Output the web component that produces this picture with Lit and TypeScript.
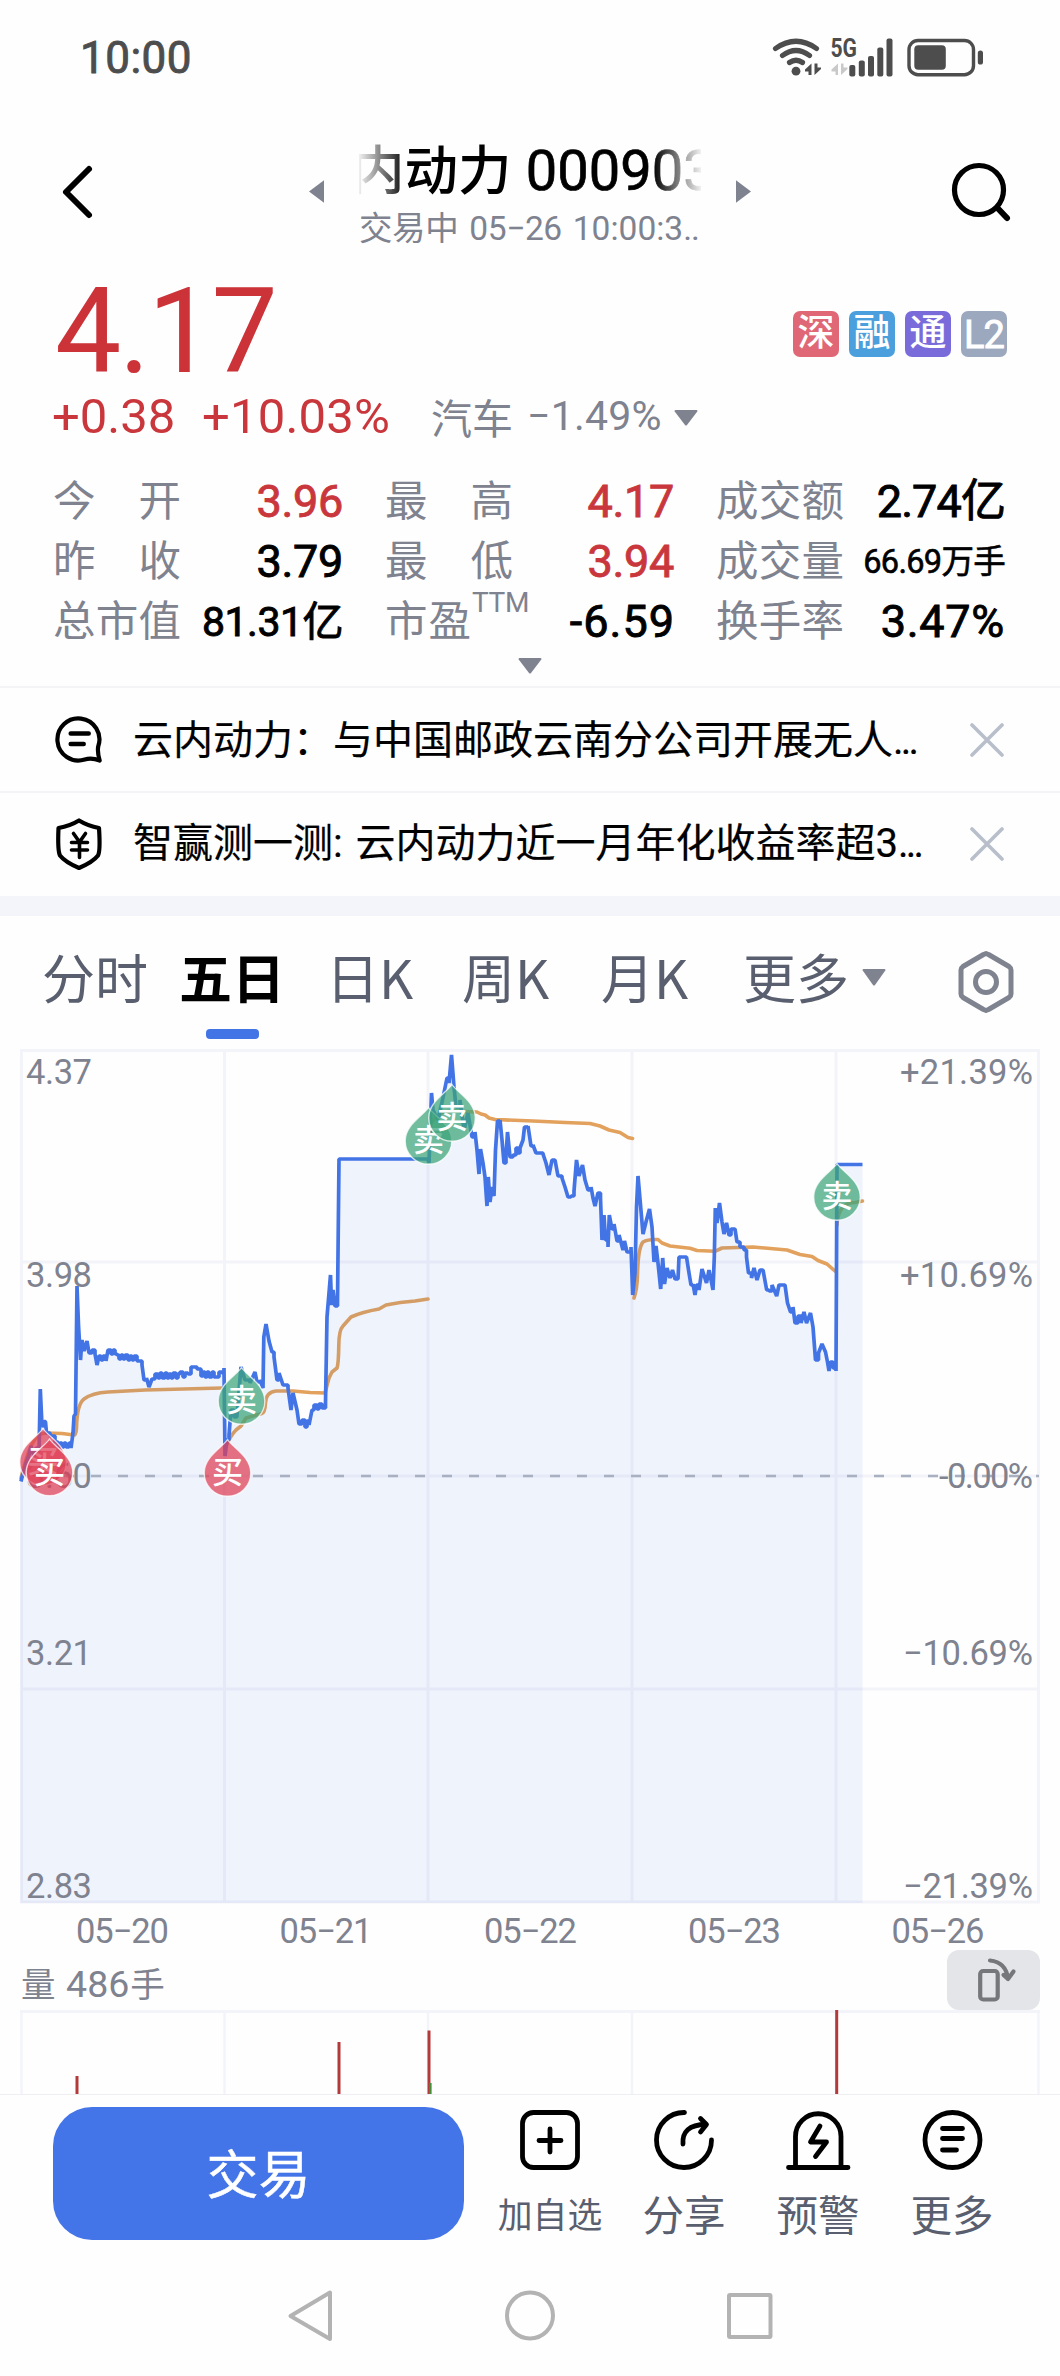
import { LitElement, html, svg, css } from "lit";
import { customElement, property } from "lit/decorators.js";
import { classMap } from "lit/directives/class-map.js";

type Point = [number, number];

const GRID_X = [21.5, 224.5, 428, 632, 836, 1038.5];
const GRID_Y = [1050.5, 1262, 1476, 1689, 1902];

const PRICE: Point[] = [
  [21, 1481.5], [23, 1473], [26, 1463], [29, 1455], [31, 1446], [34, 1456], [36, 1448], [39, 1452], [40.3, 1389], [42, 1426], [44, 1421],
  [45.5, 1422], [46.5, 1433], [50, 1436], [55, 1442], [58, 1447], [60, 1443], [62, 1447], [64, 1443], [66, 1447], [69, 1443], [71, 1448], [73, 1433], [74, 1416],
  [75.5, 1414], [77, 1286], [78.5, 1325], [80.5, 1360], [82, 1340], [84, 1351], [87, 1341], [89, 1353], [92, 1350], [95, 1354],
  [97, 1365], [99, 1356], [101, 1360], [103, 1356], [106, 1361], [108, 1350], [111, 1354], [113, 1350], [115, 1354], [117, 1355], [119, 1359], [121, 1355], [123, 1359], [125, 1355],
  [128, 1360], [130, 1356], [132, 1360], [134, 1356], [137, 1361], [142, 1365], [144, 1380], [146.5, 1378], [149, 1387], [152, 1379], [155, 1374], [158, 1378],
  [160, 1373], [162, 1378], [165, 1373], [167, 1378], [169, 1374], [171, 1378], [173, 1373], [176, 1378], [178, 1374], [180, 1372], [183, 1377], [185, 1373], [188, 1374], [191, 1367], [197, 1369],
  [201, 1376], [203, 1372], [205, 1377], [207, 1372], [209, 1377], [212, 1372], [214, 1377], [216, 1377], [219, 1372], [222, 1373], [224, 1368], [225, 1456], [227, 1440],
  [229, 1435], [231, 1410], [234, 1417], [237, 1415], [241, 1367], [245, 1380], [250, 1383], [255, 1372], [257, 1382], [260, 1380],
  [263, 1388], [263.8, 1337], [266, 1324], [269, 1341], [272, 1352], [274, 1357], [277, 1380], [279, 1373], [283, 1385], [288, 1388],
  [291, 1410], [293, 1393], [297, 1410], [299, 1424], [302, 1420], [305, 1427], [307, 1421], [309, 1425], [312, 1410], [314, 1405], [317, 1409], [319, 1404],
  [322, 1408], [325.5, 1403], [327, 1317], [330.5, 1275], [331.6, 1305], [333, 1290], [335, 1306], [337.5, 1302], [339, 1159],
  [428, 1159], [429, 1163], [431.5, 1093], [433, 1110], [438, 1120], [442.5, 1100], [447, 1078], [449, 1083], [451.5, 1055],
  [454, 1087], [456, 1107], [460, 1100], [464, 1130], [468, 1113], [472, 1137], [475, 1132], [477, 1150], [479, 1174], [480.5, 1149],
  [483, 1163], [485, 1177], [487, 1206], [488.3, 1177], [490, 1202], [492, 1187], [494, 1196], [495.5, 1150], [497.5, 1121],
  [500, 1120], [502, 1140], [504, 1163], [506, 1156], [507.5, 1132], [510, 1157], [513, 1155], [516, 1148], [518, 1153], [520, 1148],
  [523, 1140], [524.5, 1127], [528, 1126], [531, 1146], [533, 1145], [536, 1153], [543, 1154], [546, 1163], [549, 1175], [552, 1160],
  [555, 1160], [558, 1176], [562, 1178], [565, 1187], [568, 1197], [571, 1196], [574, 1191], [576.5, 1160], [579, 1176],
  [582.5, 1165], [585, 1180], [588, 1190], [591, 1187], [593, 1198], [595, 1206], [598, 1193], [600.5, 1198], [602, 1240],
  [604, 1215], [605.5, 1240], [608, 1247], [609.3, 1215], [612, 1229], [614, 1224], [617, 1241], [619, 1235], [623, 1250],
  [624.5, 1241], [627, 1252], [631, 1247], [632.7, 1295], [635, 1273], [636.5, 1207], [638, 1176], [640.5, 1205], [643, 1234],
  [646.5, 1220], [649.5, 1209], [652, 1227], [654, 1262], [656, 1246], [658, 1263], [660.7, 1289], [662.7, 1258], [664.5, 1284],
  [667, 1268], [670, 1278], [672.5, 1270], [675, 1279], [678, 1279], [679, 1257], [686.5, 1257], [689, 1273], [691, 1285],
  [693, 1284], [695, 1295], [696.5, 1285], [699, 1290], [702, 1269], [706.5, 1283], [709, 1270], [713, 1290], [714.3, 1257],
  [715.3, 1208], [717, 1223], [719.5, 1203], [722, 1222], [724, 1234], [726.5, 1223], [729, 1235], [731, 1229], [735, 1229],
  [737, 1242], [740, 1247], [744, 1250], [746.5, 1257], [748.5, 1273], [751.5, 1278], [754, 1268], [757, 1280], [760, 1270],
  [763, 1270], [766.7, 1290], [769, 1291], [772, 1285], [776.7, 1296], [779, 1285], [785, 1285], [787.5, 1303], [790.5, 1312],
  [793, 1307], [795, 1323], [798, 1316], [801, 1323], [804, 1312], [806.5, 1323], [810.5, 1313], [813, 1327], [815.5, 1360],
  [818.5, 1353], [822, 1344], [825.5, 1352], [827.5, 1362], [829, 1371], [830.5, 1362], [833, 1368], [836, 1371], [837, 1164.5],
  [862.5, 1164.5],
];

/** Small moves are drawn as one-tick steps, larger ones as straight segments. */
function pricePath(points: Point[]): string {
  return points.map(([x, y], i) => {
    if (i === 0) return `M${x} ${y}`;
    const [px, py] = points[i - 1];
    return Math.abs(y - py) < 7.5 && x - px > 1.5 ? `H${x}V${y}` : `L${x} ${y}`;
  }).join("");
}

const AVERAGES: string[] = [
  "M21 1478C28 1450 34 1433 46 1433L62 1433.5L74 1435Q76 1435 76.5 1428Q77 1404 84 1399Q92 1393 108 1392L145 1390L222 1388",
  "M225 1448Q230 1436 236 1430L241 1426L246 1418L262 1413.5Q265 1413 265.5 1403Q266 1392 276 1391L293 1391L310 1392.5L325 1393L329 1378L332 1372L337 1368Q338.500 1364 338.800 1345Q339 1330 343 1326L351 1317Q362 1312 379 1309L386 1305Q400 1302 415 1301L428 1299",
  "M430 1125Q438 1111 452 1111L477 1112L481 1114L485 1115L489 1118L495 1119.500L533 1121L565 1122.500L590 1123.500L600 1126L609 1130L620 1132.500L628 1137.500L632.500 1138.500",
  "M634 1298Q637 1290 637.500 1275Q638 1248 643 1242Q648 1239 658 1239.500L662 1243L670 1246L690 1248.300L697 1250.500L715 1251.300L722 1248L753 1247L787 1250L800 1254.500L812 1256.500L818 1260.500L827 1264L835 1271",
  "M837 1225Q838 1206 850 1203L855 1202.500L862.500 1201",
];

const PRICE_LABELS: [string, number][] = [["4.37", 1083.5], ["3.98", 1286.5], ["3.60", 1487.5], ["3.21", 1665], ["2.83", 1897.5]];
const PERCENT_LABELS: [string, number, number][] = [
  ["+21.39%", 1083.5, 133], ["+10.69%", 1286.5, 133], ["-0.00%", 1487.5, 94], ["−10.69%", 1665, 130], ["−21.39%", 1897.5, 130],
];
const DATES: [string, number][] = [["05−20", 122.5], ["05−21", 326], ["05−22", 530.5], ["05−23", 734.5], ["05−26", 938]];

const TRADES: { side: "buy" | "sell"; x: number; y: number }[] = [
  { side: "buy", x: 43, y: 1428.5 },
  { side: "buy", x: 49.5, y: 1439 },
  { side: "buy", x: 227.5, y: 1439.5 },
  { side: "sell", x: 241.5, y: 1367.5 },
  { side: "sell", x: 428.5, y: 1107.5 },
  { side: "sell", x: 452, y: 1084.5 },
  { side: "sell", x: 837, y: 1163.5 },
];

@customElement("status-bar")
class StatusBar extends LitElement {
  static styles = css`
    :host { display: flex; justify-content: space-between; height: 116px; padding: 0 74px 0 80px; box-sizing: border-box; color: #4d4d4d; }
    .time { font: 400 44px/117px Roboto, "Noto Sans CJK SC", sans-serif; -webkit-text-stroke: .9px #4d4d4d; letter-spacing: 0.5px; }
    .icons { width: 214px; height: 116px; }
    .net { font: 700 25.5px Roboto, sans-serif; fill: #4d4d4d; }
  `;
  render() {
    return html`<div class="time">10:00</div>
      <svg class="icons" viewBox="772 0 214 116" fill="#4d4d4d">
        <g fill="none" stroke="#4d4d4d" stroke-width="5.200" stroke-linecap="round">
          <path d="M775.500 48.500Q796 34 816.500 48.500" />
          <path d="M782.500 55.500Q796 45.500 809.500 55.500" />
          <path d="M789.500 62.500Q796 58 802.500 62.500" />
        </g>
        <circle cx="796" cy="71.200" r="4.400" />
        <path d="M811.500 63.500V75H808.500V71.500H805V69.500ZM814.500 63.500V75L821 69V67.500H817.500V63.500Z" />
        <path d="M838 63.500V75H835.500V71.500H831.500V69.500ZM841 63.500V75L847.500 69V67.500H843.500V63.500Z" fill="#c9c9c9" />
        <text class="net" x="830.500" y="57" textLength="26.500" lengthAdjust="spacingAndGlyphs">5G</text>
        <rect x="849.300" y="65" width="6" height="11.500" rx="2" />
        <rect x="858.800" y="60.500" width="6" height="16" rx="2" />
        <rect x="868" y="56" width="6" height="20.500" rx="2" />
        <rect x="877.300" y="47.500" width="6" height="29" rx="2" />
        <rect x="886.500" y="38.500" width="6" height="38" rx="2" />
        <rect x="909" y="40.500" width="64.500" height="34.200" rx="9" fill="none" stroke="#4d4d4d" stroke-width="3.400" />
        <rect x="914.300" y="45.300" width="31.500" height="24.500" rx="4" />
        <rect x="977.800" y="50.500" width="5.200" height="14" rx="2.600" />
      </svg>`;
  }
}

@customElement("stock-header")
class StockHeader extends LitElement {
  static styles = css`
    :host { display: grid; grid-template-columns: 309px 15px 35px 345px 32px 15px 1fr; height: 150px; align-items: center; font-family: Roboto, "Noto Sans CJK SC", sans-serif; }
    .back { width: 309px; height: 150px; grid-column: 1; }
    .prev, .next { width: 15px; height: 150px; }
    .next { grid-column: 6; }
    .title { grid-column: 4; align-self: start; padding-top: 18px; }
    .name { width: 342px; font-weight: 500; font-size: 53.5px; line-height: 74px; white-space: nowrap; text-indent: -8px; color: #000; overflow: hidden;
      -webkit-mask-image: linear-gradient(90deg, rgba(0,0,0,.05), #000 14%, #000 86%, rgba(0,0,0,.05)); mask-image: linear-gradient(90deg, rgba(0,0,0,.05), #000 14%, #000 86%, rgba(0,0,0,.05)); }
    .code { font-weight: 400; font-size: 56px; -webkit-text-stroke: .7px #000; margin-left: 1px; }
    .state { font-size: 33.5px; line-height: 44px; color: #7f828f; white-space: nowrap; display: flex; gap: 11px; margin-top: -2px; letter-spacing: -.4px; }
    .clock { letter-spacing: 0; }
    .dots { letter-spacing: -1px; }
    .search { grid-column: 7; width: 309px; height: 150px; }
  `;
  render() {
    return html`<svg class="back" viewBox="0 116 309 150"><path d="M89 169L66 192L89 215" fill="none" stroke="#000" stroke-width="6" stroke-linecap="round" stroke-linejoin="round" /></svg>
      <svg class="prev" viewBox="309 116 15 150"><path d="M324.500 180V203L309 191.500Z" fill="#7f828f" /></svg>
      <div class="title">
        <div class="name">内动力 <span class="code">000903</span></div>
        <div class="state"><span>交易中</span><span>05−26</span><span class="clock">10:00:3<span class="dots">..</span></span></div>
      </div>
      <svg class="next" viewBox="736 116 15 150"><path d="M735.500 180V203L751 191.500Z" fill="#7f828f" /></svg>
      <svg class="search" viewBox="751 116 309 150"><g fill="none" stroke="#000" stroke-width="5.200" stroke-linecap="round"><circle cx="979" cy="190" r="24.500" /><path d="M997.500 208L1007 218" stroke-width="6" /></g></svg>`;
  }
}

@customElement("stock-quote")
class StockQuote extends LitElement {
  static styles = css`
    :host { display: block; height: 420px; font-family: Roboto, "Noto Sans CJK SC", sans-serif; color: #7f828f; }
    .top { display: flex; justify-content: space-between; padding: 6px 53px 0 55px; height: 116px; box-sizing: border-box; }
    .price { font-size: 118px; line-height: 121px; color: #cc3338; letter-spacing: -2.4px; }
    .tags { display: flex; gap: 10px; padding-top: 39px; }
    .tag { width: 46px; height: 46px; border-radius: 7px; color: #fff; font-weight: 500; font-size: 37px; line-height: 46px; text-align: center; }
    .sz { background: #df6776; } .margin { background: #4a9fdc; } .connect { background: #7a6bdb; }
    .level { background: #9ca8be; font-weight: 400; font-size: 38px; line-height: 48px; -webkit-text-stroke: .9px #fff; letter-spacing: -1px; }
    .change { display: flex; align-items: center; height: 68px; padding-left: 52px; color: #c9373c; font-size: 49px; white-space: nowrap; }
    .delta { width: 150px; } .pct { width: 229px; letter-spacing: .2px; }
    .sector { color: #7f828f; font-size: 41px; display: flex; align-items: center; } .sector span { margin-left: 14px; letter-spacing: .2px; }
    .down { width: 24px; height: 16px; fill: #7f828f; display: block; }
    .sector .down { margin-left: 12px; margin-top: 4px; }
    .stats { display: grid; grid-template-columns: 290px 289px 289px; column-gap: 42px; padding: 22px 54px 0 53px; }
    .cell { display: flex; justify-content: space-between; align-items: center; height: 60px; white-space: nowrap; }
    .label { font-size: 42.5px; line-height: 60px; width: 128px; display: flex; justify-content: space-between; }
    .ttm { font-size: 28px; line-height: 30px; margin: -4px -16px 0 0; letter-spacing: -.4px; }
    .value { color: #000; font-size: 45px; font-weight: 400; line-height: 60px; letter-spacing: -.3px; -webkit-text-stroke: .9px #000; }
    .value.up { color: #c9373c; -webkit-text-stroke: .9px #c9373c; }
    .value.yi { letter-spacing: -.9px; }
    .value.neg { letter-spacing: 1px; margin-right: -1px; }
    .value.rate { letter-spacing: .7px; }
    .value.mid { font-size: 41px; letter-spacing: -.5px; }
    .value.small { font-size: 32.5px; letter-spacing: -.7px; -webkit-text-stroke: .6px #000; }
    .expand { display: flex; justify-content: center; padding-top: 6px; }
  `;
  render() {
    const down = html`<svg class="down" viewBox="0 0 24 16"><path d="M1.500 0H22.500Q24 0 23.300 1.500L13 15Q12 16 11 15L.7 1.500Q0 0 1.500 0Z" /></svg>`;
    const cells: [string[], string, string][] = [
      [["今", "开"], "3.96", "up"], [["最", "高"], "4.17", "up"], [["成", "交", "额"], "2.74亿", "yi"],
      [["昨", "收"], "3.79", ""], [["最", "低"], "3.94", "up"], [["成", "交", "量"], "66.69万手", "small"],
      [["总", "市", "值"], "81.31亿", "mid"], [["市", "盈", "TTM"], "-6.59", "neg"], [["换", "手", "率"], "3.47%", "rate"],
    ];
    return html`<div class="top">
        <div class="price">4.17</div>
        <div class="tags"><div class="tag sz">深</div><div class="tag margin">融</div><div class="tag connect">通</div><div class="tag level">L2</div></div>
      </div>
      <div class="change"><div class="delta">+0.38</div><div class="pct">+10.03%</div><div class="sector">汽车<span>−1.49%</span>${down}</div></div>
      <div class="stats">
        ${cells.map(([label, value, kind]) => html`<div class="cell">
          <div class="label">${label.map((c) => html`<span class=${classMap({ ttm: c === "TTM" })}>${c}</span>`)}</div>
          <div class="value ${kind}">${value}</div>
        </div>`)}
      </div>
      <div class="expand">${down}</div>`;
  }
}

@customElement("notice-row")
class NoticeRow extends LitElement {
  @property() kind = "news";
  @property() text = "";
  static styles = css`
    :host { display: flex; align-items: center; height: 105px; box-sizing: border-box; border-top: 2px solid #f4f4f6; padding: 0 56px 0 54px; font-family: "Noto Sans CJK SC", sans-serif; }
    :host([kind="test"]) { padding-bottom: 2px; }
    .icon { width: 50px; height: 54px; fill: none; stroke: #000; stroke-width: 4.2; stroke-linecap: round; stroke-linejoin: round; }
    .text { flex: 1; margin-left: 29px; font: 400 40px/60px Roboto, "Noto Sans CJK SC", sans-serif; color: #000; white-space: nowrap; -webkit-text-stroke: .2px #000; padding-top: 2px; }
    :host([kind="test"]) .text { padding-top: 0; word-spacing: 3px; }
    .more { letter-spacing: -2.8px; }
    .close { width: 34px; height: 34px; fill: none; stroke: #b9bfca; stroke-width: 3.6; stroke-linecap: round; }
  `;
  render() {
    const icon = this.kind === "news"
      ? svg`<path d="M45.700 47.500Q43.200 39 44.200 33.500A21 21 0 1 0 30.700 46.500Q37.700 44.500 45.700 47.500Z" /><path d="M16.700 20.500H34.700M16.700 31H29.700" stroke-width="4.500" />`
      : svg`<path d="M25 3.500Q34 9 45 11Q46.500 34 44 38.500Q39 45 25 51Q11 45 6 38.500Q3.500 34 4.500 11Q16 9 25 3.500Z" /><path d="M19.500 16.500L25.500 25L31.500 16.500M17.500 25.500H33.500M17.500 33H33.500M25.500 25V40.500" stroke-width="3.600" />`;
    return html`<svg class="icon" viewBox="0 0 50 54">${icon}</svg><div class="text">${this.text}<span class="more">...</span></div>
      <svg class="close" viewBox="0 0 34 34"><path d="M2 2L32 32M32 2L2 32" /></svg>`;
  }
}

@customElement("period-tabs")
class PeriodTabs extends LitElement {
  static styles = css`
    :host { display: grid; grid-template-columns: 137px 147px 136px 139px 142px 119px 96px 58px; height: 129px; padding-left: 42px; box-sizing: border-box; font: 400 53px/121px "Noto Sans CJK SC", sans-serif; color: #5a5f6f; white-space: nowrap; }
    .tab { display: flex; flex-direction: column; height: 129px; }
    .on { color: #000; font-weight: 700; font-size: 53px; }
    .label { height: 113px; }
    .bar { width: 53px; height: 10px; border-radius: 4px; background: #4374e6; margin-left: 27px; }
    .down { width: 24px; height: 17px; margin: 53px 0 0 0; fill: #7f828f; }
    .gear { width: 58px; height: 64px; margin: 34px 0 0 -1px; fill: none; stroke: #7f828f; stroke-width: 5; stroke-linejoin: round; }
  `;
  render() {
    return html`${["分时", "五日", "日K", "周K", "月K", "更多"].map((t) => html`<div class=${classMap({ tab: true, on: t === "五日" })}>
        <div class="label">${t}</div>${t === "五日" ? html`<div class="bar"></div>` : ""}</div>`)}
      <svg class="down" viewBox="0 0 24 17"><path d="M1.500 0H22.500Q24 0 23.300 1.500L13 16Q12 17 11 16L.7 1.500Q0 0 1.500 0Z" /></svg>
      <svg class="gear" viewBox="0 0 58 64"><path d="M29 3.500L31.500 4.500L52 16.500Q54 18 54 20V44Q54 46 52 47.500L31.500 59.500L29 60.500L26.500 59.500L6 47.500Q4 46 4 44V20Q4 18 6 16.500L26.500 4.500Z" /><circle cx="29" cy="32" r="10.500" /></svg>`;
  }
}

@customElement("price-chart")
class PriceChart extends LitElement {
  static styles = css`
    :host { display: block; height: 905px; }
    .chart { display: block; width: 1060px; height: 905px; }
    .axis { font: 400 34.5px Roboto, sans-serif; fill: #7f828f; }
    .mark { font: 500 31px "Noto Sans CJK SC", sans-serif; fill: #fff; text-anchor: middle; }
    .end { text-anchor: end; }
    .mid { text-anchor: middle; }
    .avg { fill: none; stroke: #e2a15c; stroke-width: 3.6; stroke-linecap: round; stroke-linejoin: round; }
    .price { fill: none; stroke: #4374e6; stroke-width: 3.7; stroke-linejoin: bevel; }
    .buy { fill: #df3f57; fill-opacity: .73; stroke: #fff; stroke-opacity: .75; stroke-width: 1.4; }
    .sell { fill: #3ca57a; fill-opacity: .73; stroke: #fff; stroke-opacity: .75; stroke-width: 1.4; }
  `;
  render() {
    const line = pricePath(PRICE);
    return html`<svg class="chart" viewBox="0 1045 1060 905">
      <g stroke="#f3f4f9" stroke-width="3">
        ${GRID_Y.map((y) => svg`<path d="M20 ${y}H1040" />`)}
        ${GRID_X.map((x) => svg`<path d="M${x} 1050V1903" />`)}
      </g>
      ${AVERAGES.map((d) => svg`<path class="avg" d=${d} />`)}
      <path d="${line}V1903H20.500V1481Z" fill="#4374e6" fill-opacity=".08" />
      <path class="price" d=${line} />
      <path d="M37 1476H1039" stroke="#a9b1c1" stroke-width="2.600" stroke-dasharray="10 17" />
      ${PRICE_LABELS.map(([t, y]) => svg`<text class="axis" x="26" y=${y} textLength="66">${t}</text>`)}
      ${PERCENT_LABELS.map(([t, y, w]) => svg`<text class="axis end" x="1033" y=${y} textLength=${w}>${t}</text>`)}
      ${DATES.map(([t, x]) => svg`<text class="axis mid" x=${x} y="1943" textLength="93">${t}</text>`)}
      ${TRADES.map((t) => svg`<g transform="translate(${t.x} ${t.y})">
        <path class=${t.side} d="M0 0C5 8 23.300 17 23.300 33.500A23.300 23.300 0 0 1 -23.300 33.500C-23.300 17 -5 8 0 0Z" />
        <text class="mark" y="43.500">${t.side === "buy" ? "买" : "卖"}</text></g>`)}
    </svg>`;
  }
}

@customElement("volume-panel")
class VolumePanel extends LitElement {
  static styles = css`
    :host { display: block; height: 144px; }
    .head { display: flex; justify-content: space-between; height: 60px; padding: 0 20px 0 21px; color: #7f828f; font: 400 34.5px/69px Roboto, "Noto Sans CJK SC", sans-serif; white-space: nowrap; }
    .qty { font-size: 37.5px; margin: 0 1px 0 2px; }
    .rotate { width: 93px; height: 60px; border-radius: 12px; background: #e4e5e9; }
    .bars { display: block; width: 1060px; height: 84px; }
  `;
  render() {
    const bars: Point[] = [[77, 2076], [339, 2042], [429, 2030.5], [836.7, 2010]];
    return html`<div class="head"><div>量 <span class="qty">486</span>手</div>
        <svg class="rotate" viewBox="947 1950 93 60" fill="none" stroke="#76777a" stroke-width="4.200" stroke-linecap="round" stroke-linejoin="round">
          <rect x="980.200" y="1971" width="17.500" height="28.500" rx="3" /><path d="M990 1960.500Q1006 1962 1008 1979L1013.500 1971.500M1008 1979L1003.500 1975" />
        </svg></div>
      <svg class="bars" viewBox="0 2010 1060 84">
        <path d="M20 2011.500H1040" stroke="#f3f4f9" stroke-width="3" />
        ${GRID_X.map((x) => svg`<path d="M${x} 2010V2094" stroke="#f3f4f9" stroke-width="2.500" />`)}
        ${bars.map(([x, y]) => svg`<path d="M${x} ${y}V2094" stroke="#b23a3a" stroke-width="3" />`)}
        <path d="M430.300 2083V2094" stroke="#3f8f3a" stroke-width="2.600" />
      </svg>`;
  }
}

@customElement("action-bar")
class ActionBar extends LitElement {
  static styles = css`
    :host { display: flex; height: 160px; box-sizing: border-box; border-top: 1px solid #efeff3; padding: 12px 0 0 53px; font-family: "Noto Sans CJK SC", sans-serif; }
    .trade { width: 411px; height: 133px; border-radius: 39px; background: #4374e8; color: #fff; font-weight: 400; -webkit-text-stroke: .5px #fff; font-size: 52px; line-height: 130px; text-align: center; }
    .items { display: grid; grid-template-columns: repeat(4, 134px); margin-left: 19px; }
    .item { display: flex; flex-direction: column; align-items: center; padding-top: 1px; color: #5a5f6f; font-size: 41.5px; white-space: nowrap; }
    .icon { width: 68px; height: 64px; fill: none; stroke: #000; stroke-width: 4.8; stroke-linecap: round; stroke-linejoin: round; }
    .label { height: 60px; line-height: 60px; margin-top: 11px; }
    .narrow { font-size: 34.8px; }
  `;
  render() {
    const items = [
      { label: "加自选", icon: svg`<rect x="6.500" y="4.500" width="55" height="55" rx="11" /><path d="M34 21V44M23 32.500H45" />` },
      { label: "分享", icon: svg`<path d="M34.500 4.500A27.500 27.500 0 1 0 61.500 32" /><path d="M33 36C32 24 39 16.500 56 16.500M50.500 10.500L56.500 16.500L50.500 24" />` },
      { label: "预警", icon: svg`<path d="M11.500 59V28.500A22.500 22.500 0 0 1 57 28.500V59M4.500 59.500H64" /><path d="M36 18L26.500 34H42.500L31.500 48.500" />` },
      { label: "更多", icon: svg`<circle cx="34.500" cy="32" r="27.500" /><path d="M24.500 20.500H44.500M24.500 30.500H44.500M24.500 42H38.500" />` },
    ];
    return html`<div class="trade">交易</div><div class="items">
      ${items.map((i) => html`<div class="item"><svg class="icon" viewBox="0 0 68 64">${i.icon}</svg>
        <div class=${classMap({ label: true, narrow: i.label.length > 2 })}>${i.label}</div></div>`)}
    </div>`;
  }
}

@customElement("app-root")
class AppRoot extends LitElement {
  static styles = css`
    :host { display: flex; flex-direction: column; width: 1060px; height: 2376px; background: #fefefe; overflow: hidden; }
    .band { height: 20px; background: #f4f5fa; }
    .nav { display: block; width: 1060px; height: 122px; fill: none; stroke: #b3b3b3; stroke-width: 4; stroke-linejoin: round; }
  `;
  render() {
    return html`<status-bar></status-bar>
      <stock-header></stock-header>
      <stock-quote></stock-quote>
      <notice-row kind="news" text="云内动力：与中国邮政云南分公司开展无人"></notice-row>
      <notice-row kind="test" text="智赢测一测: 云内动力近一月年化收益率超3"></notice-row>
      <div class="band"></div>
      <period-tabs></period-tabs>
      <price-chart></price-chart>
      <volume-panel></volume-panel>
      <action-bar></action-bar>
      <svg class="nav" viewBox="0 2254 1060 122"><path d="M330 2292.500V2339L290.500 2316Z" /><circle cx="530" cy="2315.500" r="23" /><rect x="729" y="2295" width="41.500" height="42" rx="1" /></svg>`;
  }
}
